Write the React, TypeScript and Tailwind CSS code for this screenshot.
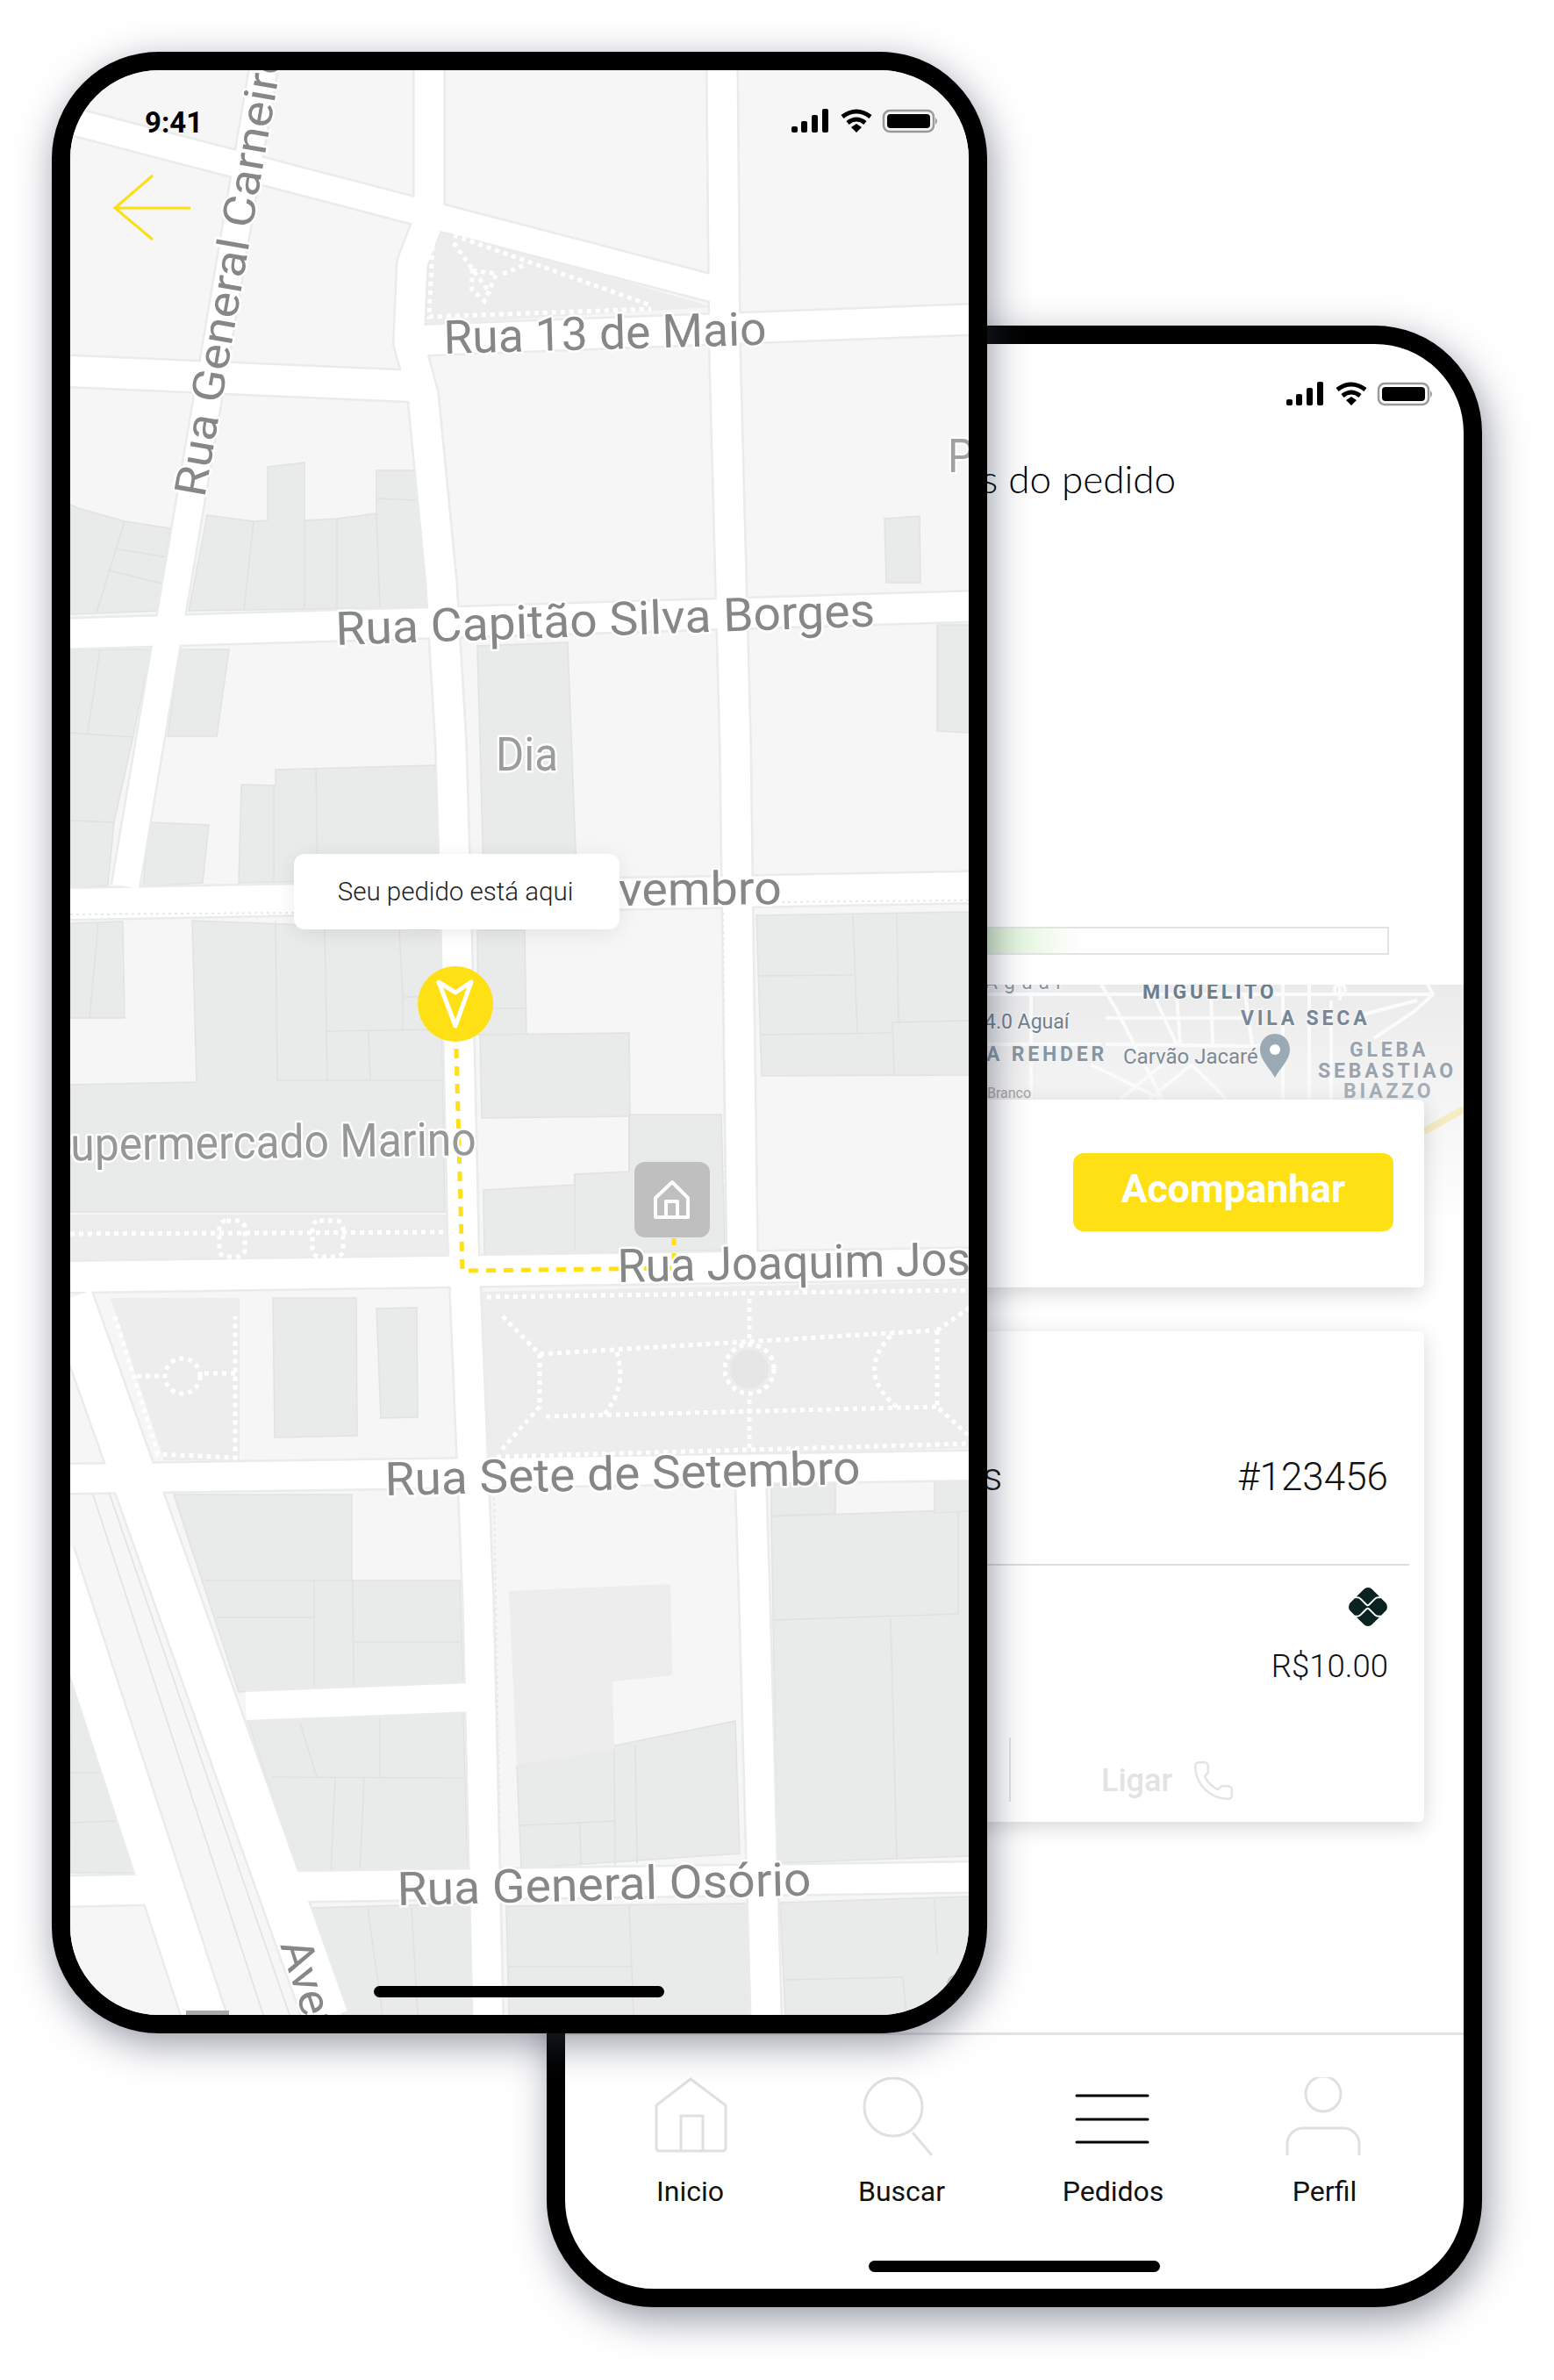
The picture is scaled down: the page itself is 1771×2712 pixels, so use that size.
import { Phone } from 'lucide-react';
import { SiPix } from 'react-icons/si';

// all map coordinates below are page pixels, the viewBox of each map starts where its screen does
const ROADS: { d: string; w: number }[] = [
  { d: 'M81 138 L813 329', w: 29 },
  { d: 'M489 80 L489 250 L470 300 L466 390 L482 450 L503 665 L514 850 L520 1057 L528 1414 L545 1825 L556 2296', w: 33 },
  { d: 'M823 80 L826 400 L838 850 L846 1440', w: 33 },
  { d: 'M855 1670 L860 1825 L873 2296', w: 33 },
  { d: 'M470 388 L1105 364', w: 33 },
  { d: 'M80 423 L470 440', w: 34 },
  { d: 'M310 20 L143 1010', w: 30 },
  { d: 'M80 722 L1105 691', w: 33 },
  { d: 'M80 1030 L1105 1011', w: 34 },
  { d: 'M80 1455 L1105 1440', w: 34 },
  { d: 'M80 1685 L1105 1670', w: 32 },
  { d: 'M80 2155 L170 2153', w: 33 },
  { d: 'M312 2150 L1105 2139', w: 33 },
  { d: 'M280 1944 L540 1934', w: 32 },
  { d: 'M80 1479 L372 2300', w: 50 },
  { d: 'M60 1770 L240 2320', w: 48 },
];

const BUILDINGS = [
  '80,575 89,579 142,594 194,602 180,696 80,700',
  '236,587 289,594 305,593 305,532 347,527 347,593 384,591 429,585 429,536 476,536 489,692 215,696',
  '1008,591 1048,588 1049,664 1010,664',
  '1068,712 1105,712 1105,835 1068,833',
  '80,740 172,740 152,838 130,937 123,1009 80,1012',
  '205,740 261,740 247,839 191,839',
  '170,937 238,940 231,1006 163,1010',
  '275,894 314,895 314,877 496,872 501,1001 272,1006',
  '544,736 647,732 656,970 660,995 551,996',
  '80,1052 140,1050 142,1160 80,1160',
  '219,1049 502,1060 507,1381 80,1381 80,1236 224,1233',
  '544,1060 598,1060 600,1179 545,1179',
  '547,1179 717,1177 718,1272 549,1274',
  '717,1270 822,1270 826,1424 552,1430 551,1356 655,1350 655,1338 717,1335',
  '862,1043 1105,1039 1105,1225 868,1226',
  '311,1479 406,1479 407,1636 313,1638',
  '429,1491 475,1490 476,1615 434,1616',
  '198,1703 401,1703 401,1801 524,1801 528,1918 272,1928',
  '282,1960 528,1951 533,2131 342,2140',
  '82,1912 154,2134 80,2134',
  '589,2012 838,1961 843,2112 594,2129',
  '879,1728 1105,1720 1105,2115 886,2123',
  '879,1692 952,1690 952,1725 879,1727',
  '1065,1686 1105,1684 1105,1722 1065,1724',
  '354,2174 535,2169 538,2296 390,2296',
  '577,2172 854,2169 857,2296 580,2296',
  '889,2168 1105,2161 1105,2296 895,2296',
];

const BUILDING_LINES = [
  'M142 594 L110 698', 'M130 625 L190 635', 'M125 650 L185 665',
  'M289 594 L278 695', 'M347 593 L347 693', 'M384 591 L384 693', 'M429 585 L433 693', 'M429 568 L476 570',
  'M114 740 L100 835', 'M80 835 L152 840', 'M80 935 L131 937',
  'M312 895 L312 1005', 'M360 876 L362 1004',
  'M112 1052 L102 1160',
  'M314 1049 L316 1231', 'M370 1052 L373 1231', 'M455 1058 L459 1136', 'M459 1136 L500 1136', 'M459 1136 L459 1175',
  'M373 1175 L503 1173', 'M420 1175 L422 1231', 'M316 1231 L503 1231',
  'M545 1149 L600 1149', 'M655 1338 L655 1424', 'M717 1272 L717 1335',
  'M972 1043 L977 1177', 'M1022 1041 L1024 1164', 'M864 1112 L973 1111', 'M868 1179 L1017 1177', 'M1017 1165 L1105 1163', 'M1017 1165 L1019 1224',
  'M233 1801 L401 1801', 'M247 1843 L359 1843', 'M358 1801 L358 1922', 'M402 1801 L403 1922', 'M402 1871 L524 1871',
  'M342 1963 L361 2025', 'M310 2025 L528 2026', 'M433 1958 L433 2026', 'M382 2026 L377 2135', 'M415 2026 L410 2134',
  'M80 2020 L113 2020', 'M80 2077 L131 2075',
  'M700 1993 L701 2126', 'M724 1988 L726 2123', 'M594 2080 L661 2077', 'M661 2077 L662 2125', 'M661 2077 L700 2075',
  'M882 1846 L1092 1839', 'M1092 1722 L1092 1839', 'M1015 1844 L1022 2118',
  'M419 2174 L436 2296', 'M469 2174 L476 2296',
  'M717 2171 L722 2296', 'M579 2241 L719 2241',
  'M1065 2164 L1068 2226', 'M893 2256 L1029 2253', 'M1029 2253 L1033 2296',
  'M105 1700 L300 2296', 'M124 1700 L330 2296',
];

const PARKS = [
  '496,257 812,350 482,370 481,300',
  '80,1384 509,1384 513,1434 80,1438',
  '126,1479 273,1479 273,1664 187,1664',
  '549,1472 1105,1460 1105,1650 557,1664',
  '580,1813 764,1805 766,1909 698,1916 700,1993 589,2012',
];

const PARK_PATHS = [
  'M517 268 L742 348', 'M493 281 L489 361 L742 352', 'M517 277 L559 335', 'M538 308 L566 312 L552 343 L538 330 Z', 'M573 312 L601 301',
  'M80 1406 L509 1404',
  'M131 1500 L180 1657 L268 1661 L268 1500', 'M156 1568 L184 1568', 'M233 1565 L268 1565',
  'M555 1478 L1105 1470', 'M566 1660 L1105 1645', 'M615 1543 L1065 1516', 'M622 1614 L1068 1603',
  'M573 1500 L615 1543 L615 1603 L570 1654', 'M703 1541 Q715 1580 689 1611', 'M1015 1522 Q975 1565 1022 1603', 'M1068 1516 L1068 1603 L1103 1635', 'M1068 1516 L1105 1490',
  'M854 1480 L854 1530', 'M854 1595 L854 1655',
];

const MAP_LABELS: { text: string; x: number; y: number; len: number; angle: number; size: number; fill?: string }[] = [
  { text: 'Rua General Carneiro', x: 233, y: 568, len: 520, angle: -80, size: 50 },
  { text: 'Rua 13 de Maio', x: 506, y: 403, len: 368, angle: -1.6, size: 53 },
  { text: 'Rua Capitão Silva Borges', x: 383, y: 735, len: 615, angle: -2, size: 53 },
  { text: 'Dia', x: 565, y: 878, len: 71, angle: 0, size: 53, fill: '#9b9d9c' },
  { text: 'vembro', x: 705, y: 1032, len: 186, angle: -0.6, size: 53 },
  { text: 'Supermercado Marino', x: 51, y: 1323, len: 492, angle: -0.8, size: 53, fill: '#969897' },
  { text: 'Rua Joaquim José', x: 704, y: 1461, len: 430, angle: -1.2, size: 53 },
  { text: 'Rua Sete de Setembro', x: 439, y: 1704, len: 542, angle: -1.4, size: 53 },
  { text: 'Rua General Osório', x: 453, y: 2171, len: 472, angle: -1.4, size: 53 },
  { text: 'Avenida', x: 319, y: 2216, len: 190, angle: 72, size: 50 },
  { text: 'P', x: 1080, y: 538, len: 30, angle: 0, size: 53, fill: '#a0a2a1' },
];

const SMALL_ROADS = [
  'M1125 1133 L1631 1133', 'M1260 1160 L1415 1160', 'M1549 1157 L1615 1140', 'M1260 1190 L1435 1192', 'M1125 1190 L1255 1190', 'M1175 1133 L1175 1253',
  'M1255 1122 L1272 1150 L1325 1253', 'M1309 1122 L1341 1190', 'M1341 1133 L1345 1190', 'M1380 1133 L1382 1190', 'M1419 1133 L1427 1190',
  'M1462 1122 L1462 1253', 'M1492 1122 L1492 1253', 'M1517 1140 L1517 1253', 'M1627 1122 L1633 1133 L1611 1153 L1566 1183',
  'M1243 1213 L1325 1253', 'M1276 1253 L1325 1213', 'M1309 1253 L1358 1213', 'M1358 1213 L1398 1253', 'M1527 1122 L1527 1140',
];

const StatusIcons = () => (
  <svg width="168" height="28" viewBox="0 0 168 28" className="block">
    <rect x="0" y="20" width="7" height="7" rx="2" fill="#000" />
    <rect x="11" y="14" width="7" height="13" rx="2" fill="#000" />
    <rect x="23" y="7" width="7" height="20" rx="2" fill="#000" />
    <rect x="35" y="0" width="7" height="27" rx="2" fill="#000" />
    <path d="M58 9 Q74 -3 90 9" fill="none" stroke="#000" strokeWidth="5" />
    <path d="M64 16 Q74 8 84 16" fill="none" stroke="#000" strokeWidth="5" />
    <path d="M68 21 L74 17 L80 21 L74 27 Z" fill="#000" />
    <rect x="105" y="2" width="57" height="24" rx="7" fill="none" stroke="#9a9a9a" strokeWidth="2.5" />
    <rect x="109" y="6" width="49" height="16" rx="4" fill="#000" />
    <path d="M164 10 Q168 14 164 18 Z" fill="#9a9a9a" />
  </svg>
);

const StreetMap = () => (
  <svg width="1025" height="2216" viewBox="80 80 1025 2216" className="block blur-[0.7px]">
    <rect x="80" y="80" width="1025" height="2216" fill="#f5f6f5" />
    {BUILDINGS.map((points) => (
      <polygon key={points} points={points} fill="#e9eaea" stroke="#e1e3e2" strokeWidth="1.5" />
    ))}
    {PARKS.map((points) => (
      <polygon key={points} points={points} fill="#ecedec" />
    ))}
    {BUILDING_LINES.map((d) => (
      <path key={d} d={d} fill="none" stroke="#dfe1e0" strokeWidth="1.5" />
    ))}
    {ROADS.map((road) => (
      <path key={road.d} d={road.d} fill="none" stroke="#e8ecea" strokeWidth={road.w + 5} strokeLinejoin="round" />
    ))}
    {ROADS.map((road) => (
      <path key={road.d} d={road.d} fill="none" stroke="#ffffff" strokeWidth={road.w} strokeLinejoin="round" />
    ))}
    {PARK_PATHS.map((d) => (
      <path key={d} d={d} fill="none" stroke="#ffffff" strokeWidth="5" strokeDasharray="5 5" />
    ))}
    <circle cx="208" cy="1568" r="20" fill="none" stroke="#ffffff" strokeWidth="5" strokeDasharray="5 5" />
    <circle cx="854" cy="1560" r="22" fill="#e5e6e5" />
    <circle cx="854" cy="1560" r="28" fill="none" stroke="#ffffff" strokeWidth="5" strokeDasharray="5 5" />
    <rect x="250" y="1391" width="29" height="41" rx="8" fill="none" stroke="#ffffff" strokeWidth="5" strokeDasharray="5 5" />
    <rect x="356" y="1391" width="35" height="41" rx="8" fill="none" stroke="#ffffff" strokeWidth="5" strokeDasharray="5 5" />
    <path d="M563 1706 L570 2112 M824 1040 L827 1424 M80 1042 L335 1040 M870 1028 L1105 1026" fill="none" stroke="#e6e9e8" strokeWidth="2" strokeDasharray="3 4" />
    <rect x="212" y="2291" width="49" height="6" fill="#a9a9a9" />
    <circle cx="1092" cy="2262" r="12" fill="none" stroke="#b8b8b8" strokeWidth="2" />
    <path d="M520 1195 L527 1448 L768 1445 L768 1411" fill="none" stroke="#ffe014" strokeWidth="5" strokeDasharray="11 9" />
    {MAP_LABELS.map((label) => (
      <text
        key={label.text}
        x={label.x}
        y={label.y}
        fontSize={label.size}
        textLength={label.len}
        lengthAdjust="spacingAndGlyphs"
        fill={label.fill ?? '#858887'}
        stroke="#ffffff"
        strokeWidth="5"
        strokeLinejoin="round"
        paintOrder="stroke"
        transform={`rotate(${label.angle} ${label.x} ${label.y})`}
      >
        {label.text}
      </text>
    ))}
  </svg>
);

const SmallMap = () => (
  <svg width="1024" height="131" viewBox="644 1122 1024 131" className="block">
    {SMALL_ROADS.map((d) => (
      <path key={d} d={d} fill="none" stroke="#fbfbfb" strokeWidth="4" />
    ))}
    <circle cx="1527" cy="1128" r="6" fill="none" stroke="#fbfbfb" strokeWidth="4" />
    <path d="M1453 1178 C1442 1178 1436 1187 1436 1196 C1436 1208 1448 1218 1453 1228 C1458 1218 1470 1208 1470 1196 C1470 1187 1464 1178 1453 1178 Z" fill="#9aa9b3" />
    <circle cx="1453" cy="1196" r="6" fill="#ffffff" />
    <g fontWeight="700" fontSize="23" stroke="#f4f4f4" strokeWidth="3" paintOrder="stroke">
      <text x="1122" y="1127" fill="#8a98a4" letterSpacing="7" fontWeight="400">Aguaí</text>
      <text x="1302" y="1138" fill="#6c7d8c" letterSpacing="3.8">MIGUELITO</text>
      <text x="1414" y="1168" fill="#76879a" letterSpacing="3.8">VILA SECA</text>
      <text x="1262" y="1209" fill="#8896a2" letterSpacing="3.8" textAnchor="end">VILA REHDER</text>
      <text x="1538" y="1204" fill="#99a4ae" letterSpacing="3.8">GLEBA</text>
      <text x="1502" y="1228" fill="#99a4ae" letterSpacing="3.8">SEBASTIAO</text>
      <text x="1531" y="1251" fill="#a7b0b8" letterSpacing="3.8">BIAZZO</text>
    </g>
    <g stroke="#f4f4f4" strokeWidth="3" paintOrder="stroke">
      <text x="1122" y="1172" fontSize="23" fill="#71808c">4.0 Aguaí</text>
      <text x="1280" y="1212" fontSize="24" fill="#7d8a94">Carvão Jacaré</text>
      <text x="1125" y="1251" fontSize="16" fill="#a9a9a9">Branco</text>
    </g>
  </svg>
);

const HomeTabIcon = () => (
  <svg width="90" height="90" viewBox="0 0 90 90" fill="none" stroke="#e0e0e0" strokeWidth="3">
    <path d="M45 2 L6 32 V80 Q6 84 10 84 H81 Q85 84 85 80 V32 Z" />
    <path d="M34 84 V44 H59 V84" />
  </svg>
);

const SearchTabIcon = () => (
  <svg width="90" height="90" viewBox="0 0 90 90" fill="none" stroke="#e0e0e0" strokeWidth="3">
    <circle cx="35" cy="34" r="33" />
    <path d="M57 63 L79 89" />
  </svg>
);

const OrdersTabIcon = () => (
  <svg width="90" height="90" viewBox="0 0 90 90" fill="none" stroke="#000000" strokeWidth="3" strokeLinecap="round">
    <path d="M3 21 H84 M3 48 H84 M3 74 H84" />
  </svg>
);

const ProfileTabIcon = () => (
  <svg width="90" height="90" viewBox="0 0 90 90" fill="none" stroke="#e0e0e0" strokeWidth="3">
    <circle cx="43" cy="19" r="20" />
    <path d="M2 89 V76 A18 18 0 0 1 20 58 H66 A18 18 0 0 1 84 76 V89" />
  </svg>
);

const TABS = [
  { label: 'Inicio', icon: <HomeTabIcon /> },
  { label: 'Buscar', icon: <SearchTabIcon /> },
  { label: 'Pedidos', icon: <OrdersTabIcon /> },
  { label: 'Perfil', icon: <ProfileTabIcon /> },
];

function OrderPhone() {
  return (
    <div className="col-start-1 row-start-1 ml-[623px] mt-[371px] flex h-[2258px] w-[1066px] flex-col overflow-hidden rounded-[122px] border-[21px] border-black bg-white shadow-[6px_14px_44px_rgba(50,55,80,0.5)]">
      <div className="flex justify-end pr-[34px] pt-[43px]">
        <StatusIcons />
      </div>

      <h1 className="mr-[328px] mt-[57px] self-end font-['Lato',sans-serif] text-[44px] font-light leading-[50px] text-black">
        Detalhes do pedido
      </h1>

      {/* progress */}
      <div className="mx-[85px] mt-[486px] h-[32px] border-2 border-[#e3e3e3] bg-[linear-gradient(90deg,#8fd97c_0%,#d8f0cf_46%,#ffffff_59%)]" />

      {/* mini map, fades out behind the cards */}
      <div className="mt-[34px] h-[280px] bg-gradient-to-b from-[#ebebec] to-white">
        <SmallMap />
        <div className="ml-[979px] mt-[32px] h-[8px] w-[52px] origin-left rotate-[-29deg] bg-[#f6ecc3]" />
      </div>

      <div className="relative z-10 mx-[45px] -mt-[149px] flex h-[214px] justify-end rounded-[6px] bg-white pr-[35px] pt-[61px] shadow-[0_6px_24px_rgba(0,0,0,0.16)]">
        <button className="h-[89px] w-[365px] rounded-[12px] bg-[#ffe014] pb-[6px] text-[44.5px] font-bold text-white">
          Acompanhar
        </button>
      </div>

      <div className="relative z-10 mx-[45px] mt-[50px] h-[559px] rounded-[6px] bg-white pt-[140px] shadow-[0_6px_24px_rgba(0,0,0,0.16)]">
        <div className="flex justify-between pr-[41px] text-[44px] font-light leading-[52px] text-[#111]">
          <span className="ml-[298px]">Pedidos</span>
          <span>#123456</span>
        </div>
        <div className="ml-0 mr-[17px] mt-[73px] h-[2px] bg-[#dcdcdc]" />
        <div className="mt-[25px] flex flex-col items-end pr-[42px]">
          <SiPix className="h-[44px] w-[44px] text-[#0a2220]" />
          <span className="mr-[-1px] mt-[24px] text-[36.5px] font-light leading-[44px] text-[#111]">R$10.00</span>
        </div>
        <div className="mt-[59px] flex h-[73px] pl-[461px]">
          <div className="w-[2px] bg-[#e3e3e3]" />
          <div className="ml-[103px] mt-[24px] flex h-[49px] items-center gap-[22px] text-[36px] font-medium text-[#e3e3e3]">
            <span>Ligar</span>
            <Phone size={50} strokeWidth={1.2} />
          </div>
        </div>
      </div>

      <nav className="mt-auto border-t-[3px] border-[#e3e3e3] pb-[19px] pt-[48px]">
        <div className="ml-[22px] grid w-[964px] grid-cols-4">
          {TABS.map((tab) => (
            <div key={tab.label} className="flex flex-col items-center">
              {tab.icon}
              <span className="mt-[21px] text-[32px] leading-[38px] text-[#111]">{tab.label}</span>
            </div>
          ))}
        </div>
        <div className="mx-auto mt-[60px] h-[13px] w-[332px] rounded-full bg-black" />
      </nav>
    </div>
  );
}

function TrackingPhone() {
  return (
    <div className="relative z-20 col-start-1 row-start-1 ml-[59px] mt-[59px] h-[2258px] w-[1066px] overflow-hidden rounded-[122px] border-[21px] border-black bg-[#f5f6f5] shadow-[4px_12px_44px_rgba(50,55,80,0.5)]">
      <StreetMap />

      <span className="absolute left-[85px] top-[41px] text-[33px] font-bold leading-[38px] text-black">9:41</span>
      <div className="absolute left-[822px] top-[44px]">
        <StatusIcons />
      </div>

      <svg className="absolute left-[48px] top-[118px]" width="90" height="78" viewBox="0 0 90 78" fill="none" stroke="#ffdd14" strokeWidth="3">
        <path d="M3 39 H89 M46 2 L3 39 L46 75" />
      </svg>

      {/* pin + label */}
      <div className="absolute left-[255px] top-[893px] flex h-[86px] w-[371px] items-center justify-center rounded-[12px] bg-white pr-[3px] text-[29.5px] font-light text-[#222] shadow-[0_4px_24px_rgba(0,0,0,0.08)]">
        Seu pedido está aqui
      </div>
      <div className="absolute left-[396px] top-[1021px] flex h-[86px] w-[86px] items-center justify-center rounded-full bg-[#ffe014]">
        <svg width="46" height="58" viewBox="0 0 46 58" fill="none" stroke="#ffffff" strokeWidth="5" strokeLinejoin="round">
          <path d="M4 4 L23 16 L41 4 L23 54 Z" />
        </svg>
      </div>
      <div className="absolute left-[643px] top-[1244px] flex h-[86px] w-[86px] items-center justify-center rounded-[12px] bg-[#bfbfbf]">
        <svg width="46" height="46" viewBox="0 0 46 46" fill="none" stroke="#ffffff" strokeWidth="4" strokeLinejoin="round">
          <path d="M23 3 L4 21 V43 H41 V21 Z" />
          <path d="M16 43 V25 H29 V43" />
        </svg>
      </div>

      <div className="absolute left-[346px] top-[2183px] h-[13px] w-[331px] rounded-full bg-black" />
    </div>
  );
}

export default function App() {
  return (
    <div className="grid h-[2712px] w-[1771px] grid-cols-1 grid-rows-1 items-start justify-items-start overflow-hidden bg-white font-['Roboto',sans-serif]">
      <OrderPhone />
      <TrackingPhone />
    </div>
  );
}
